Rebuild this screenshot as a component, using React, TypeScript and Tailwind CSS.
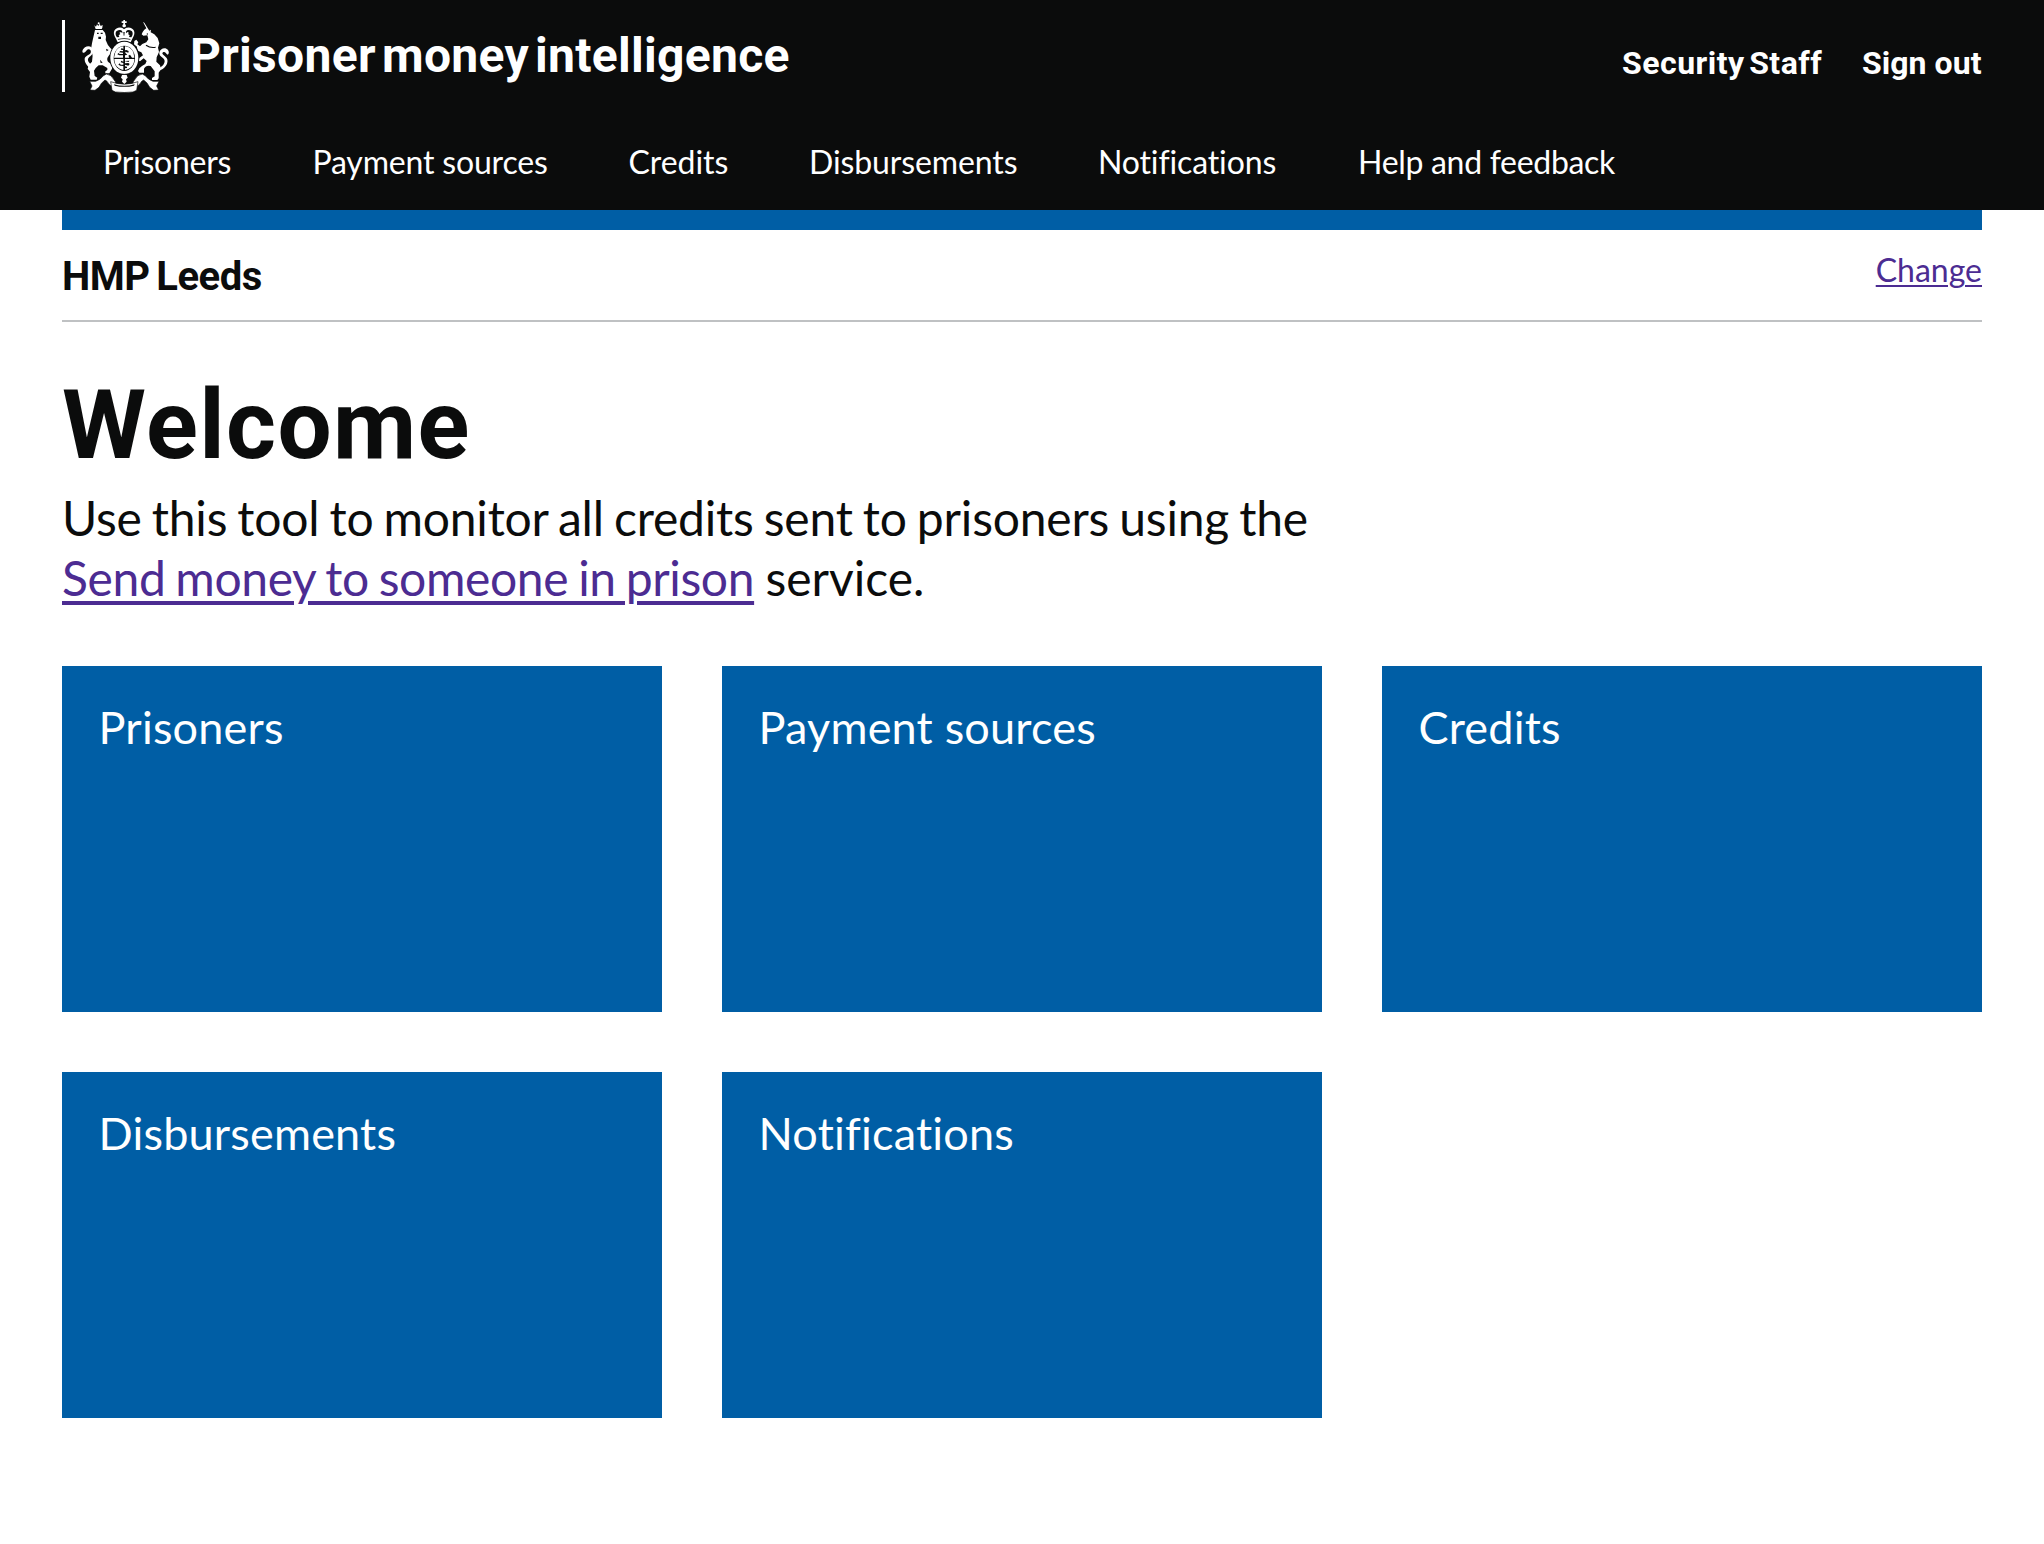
import React from "react";

const navItems = [
  { label: "Prisoners", className: "w-[209.5px] tracking-[-0.26px]" },
  { label: "Payment sources", className: "w-[316px] tracking-[-0.18px]" },
  { label: "Credits", className: "w-[180.5px] tracking-[-0.04px]" },
  { label: "Disbursements", className: "w-[289px] tracking-[-0.1px]" },
  { label: "Notifications", className: "w-[260px] tracking-[-0.13px]" },
  { label: "Help and feedback", className: "w-[270px] tracking-[-0.3px]" },
];

const cards = ["Prisoners", "Payment sources", "Credits", "Disbursements", "Notifications"];

function Crest() {
  return (
    <svg viewBox="93 27 267 222" className="block h-[74px] w-[89px]" fill="#fff" aria-hidden="true">
      {/* lion */}
      <path d="M133 46l5 4 3-7 4 5 4-7 3 7 6-3-1 8-2 4h-18z" />
      <circle cx="146" cy="40" r="3" />
      <path d="M135 60L158 60L165 68L168 80L167 90Q172 105 181 114L190 122L186 132L178 134L172 144Q170 155 180 160L188 166L186 176L178 190L166 190L166 184L172 180L172 174L158 166L146 166Q136 174 132 182L134 198L142 203L140 209L122 209L118 200L120 186L113 176L116 166L126 155Q130 140 126 124Q122 112 126 100L130 82Z" />
      <path d="M121 178c-5-9-16-15-17-29-1-12 14-13 18-20 3-8-4-14-10-10-5 3-5 9-13 9-4-3-1-11 6-16 9-7 23-3 25 9 2 14-13 18-16 26-2 9 8 14 14 22z" />
      <g fill="#0b0c0c">
        <path d="M134 57h23v2h-23zM141 68h5v4h-5zM152 68h6v4h-6zM145 80h8v7h-8z" />
        <path d="M168 116l8 4-6 4zM150 149l8 9-6 1z" />
      </g>
      {/* unicorn */}
      <path d="M279 36l4 2 15 24 5-3-1 8 11 6 10 11 5 16-4 13 3 13-7 16-1 13L330 166L333 178L326 188L326 205L322 210L306 210L306 204L314 199L314 184L302 168Q288 164 282 176L282 188L268 188L264 183L268 175L276 168L286 162L290 153l-9-8-11 9-3-2 1-8 11-8-5-9-9-4-4-9v-4l-9-7 1-10 6-4 6 8-3 6 8 6 7-7 12-5 6-9-3-12-12 1-5-4 3-7 5-7 6-4z" />
      <path d="M323 176c14-5 24-17 20-27-4-8-17-9-15-22 2-11 18-18 26-7 4 6 3 12-1 14-5-3-7-10-13-8-9 5 5 11 10 18 9 14-7 36-24 38z" />
      <path d="M287 107q13 9 30 6v-3q-15 3-28-6z" fill="#0b0c0c" />
      <circle cx="292" cy="72" r="2" fill="#0b0c0c" />
      {/* crown */}
      <path d="M220 30h5v4h5v5h-5v4a5 5 0 0 1 0 9h-5a5 5 0 0 1 0-9v-4h-5v-5h5z" />
      <path d="M198 86C184 67 195 51 213 53c4 0 7 2 9 5 3-3 6-5 10-5 18-2 29 14 15 33l-5 11q-20-5-39 0z" />
      <g fill="#0b0c0c">
        <path d="M201 82c-8-11-4-22 8-22 7 0 9 5 8 10l-4-4-5 2 3 4-5 4 2 5zM244 82c8-11 4-22-8-22-7 0-9 5-8 10l4-4 5 2-3 4 5 4-2 5z" />
        <path d="M204 87q18-5 37 0v2q-19-4-37 0z" />
        <path d="M220 66h4l-1 11h-2z" />
      </g>
      {/* ribbon */}
      <g stroke="#0b0c0c" strokeWidth="2">
        <path d="M119 214h18q16-6 22-16l10-6q16 2 22 16l6 8-4 16q-16-4-22-18l-6-4q-12 8-18 22l-12 9-15-1 6-12z" />
        <path d="M327 214h-18q-16-6-22-16l-10-6q-16 2-22 16l-6 8 4 16q16-4 22-18l6-4q12 8 18 22l12 9 15-1-6-12z" />
        <path d="M182 215q41 15 82 0l-4 26-11 5q-26 3-53 0l-10-5z" />
      </g>
      <path d="M192 223q31 9 62 0l-2 4q-29 7-58 0z" fill="#0b0c0c" />
      {/* garter and shield */}
      <ellipse cx="223" cy="144" rx="44.5" ry="51.5" fill="#0b0c0c" />
      <ellipse cx="223" cy="144" rx="42" ry="49" />
      <ellipse cx="223" cy="145" rx="32" ry="38" fill="#0b0c0c" />
      <path d="M196 127c4-10 12-17 24-18v8l-5-3-3 5 7 1v4l-8-1-4 4 12 1v4h-10l-4-3-3 4 6 3h11v7h-27z" />
      <path d="M225 109c12 1 21 8 25 18l3 16h-7l-6-9-5 3 3 6h-13v-7l7-2-6-5v-4l9 3 1-5-7-3-4 1z" />
      <path d="M193 147h27v8l-6-3-2 5 8 2v5h-8l-3-4-4 4 6 3 9 1v12c-15-2-27-15-27-33z" />
      <path d="M225 147h28c0 18-12 31-28 33v-5l6-1v-4l-6-1v-5l10 3 4-5-4-3-10 1v-6l11 2 2-4-13 1z" />
      <path d="M199 186q24 14 48 0" fill="none" stroke="#0b0c0c" strokeWidth="2" />
      <path d="M216 195h14l3 8-5 5 2 7-7 7-7-7 2-7-5-5z" />
    </svg>
  );
}

export default function App() {
  return (
    <div className="min-h-[1544px] w-full bg-white font-['Lato',sans-serif] text-[#0b0c0c]">
      <header className="h-[210px] bg-[#0b0c0c] px-[62px] text-white">
        <div className="flex h-[142px] items-start justify-between font-['Roboto',sans-serif] font-bold">
          <div className="flex">
            <div className="mt-5 h-[72px] w-[3px] bg-white" />
            <div className="mt-[19px] ml-4">
              <Crest />
            </div>
            <div className="mt-[25.5px] ml-5 text-[48px] leading-[60px] tracking-[0.3px] whitespace-nowrap [word-spacing:-6px]">
              Prisoner money intelligence
            </div>
          </div>
          <div className="mt-[43px] flex text-[32px] leading-[40px] whitespace-nowrap">
            <a className="w-[240px] tracking-[0.5px] [word-spacing:-4px]">Security Staff</a>
            <a className="w-[120px] tracking-[0.05px]">Sign out</a>
          </div>
        </div>
        <nav className="ml-[41px] flex text-[32px] leading-[40px] whitespace-nowrap">
          {navItems.map((item) => (
            <a key={item.label} className={item.className}>
              {item.label}
            </a>
          ))}
        </nav>
      </header>

      <main className="px-[62px]">
        <div className="h-5 bg-[#005ea5]" />
        <div className="flex h-[92px] items-start justify-between border-b-2 border-[#bfc1c3]">
          <h2 className="mt-[21.5px] font-['Roboto',sans-serif] text-[40px] leading-[50px] font-bold tracking-[-0.45px] [word-spacing:-3px]">
            HMP Leeds
          </h2>
          <a className="mt-5 text-[32px] leading-[40px] text-[#4c2c92] underline decoration-2 underline-offset-[3px]">
            Change
          </a>
        </div>

        <h1 className="mt-12 font-['Roboto',sans-serif] text-[96px] leading-[110px] font-bold tracking-[1.4px]">
          Welcome
        </h1>
        <p className="mt-2 text-[48px] leading-[60px] whitespace-nowrap">
          <span className="tracking-[-0.2px] [word-spacing:-2px]">
            Use this tool to monitor all credits sent to prisoners using the
          </span>
          <br />
          <a className="tracking-[-0.37px] text-[#4c2c92] underline decoration-4 underline-offset-[5px] [word-spacing:-2px]">
            Send money to someone in prison
          </a>
          <span className="[word-spacing:-1px]"> service.</span>
        </p>

        <div className="mt-[58px] grid grid-cols-3 gap-[60px]">
          {cards.map((label) => (
            <a
              key={label}
              className="h-[346px] bg-[#005ea5] pt-[33px] pl-[36.5px] text-[45px] leading-[56px] tracking-[0.2px] text-white"
            >
              {label}
            </a>
          ))}
        </div>
      </main>
    </div>
  );
}
